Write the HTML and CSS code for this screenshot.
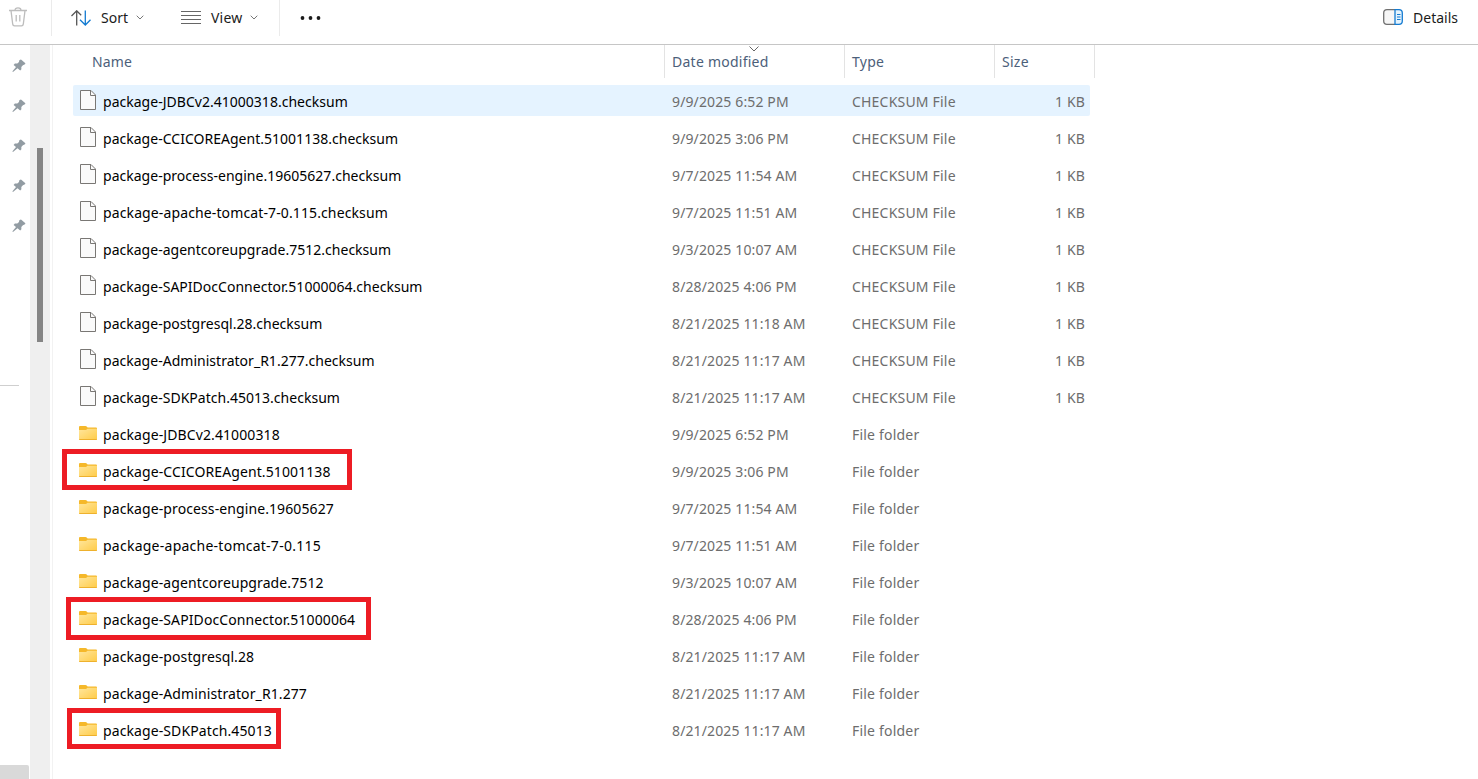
FILE: index.html
```html
<!DOCTYPE html>
<html lang="en">
  <head>
    <meta charset="UTF-8" />
    <meta name="viewport" content="width=device-width, initial-scale=1.0" />
    <title>File Explorer</title>
    <link rel="stylesheet" href="styles.css">
  </head>
  <body>
    <svg class="sprite">
      <linearGradient id="folderFill" x1="0" y1="0" x2="1" y2="1">
        <stop offset="0" stop-color="#ffe69c" />
        <stop offset="1" stop-color="#ffcb47" />
      </linearGradient>
      <symbol id="file" viewBox="0 0 18 20">
        <path d="M1.5 .5h10.5l4.5 4.5v14.5h-15z" fill="#fafafa" stroke="#797774" />
        <path d="M11.5 .5v5h5" fill="none" stroke="#797774" />
      </symbol>
      <symbol id="folder" viewBox="0 0 18 14">
        <path d="M0 1q0-1 1-1h5.500q.7 0 1.200.5l.9 1h8.400q1 0 1 1v2h-18z" fill="#f5b82a" />
        <path d="M0 4h7l1.500-1.200h9.500v10.200q0 1-1 1h-16q-1 0-1-1z" fill="url(#folderFill)" />
        <path d="M0 13h18q0 1-1 1h-16q-1 0-1-1z" fill="#eeb12d" />
      </symbol>
      <symbol id="pin" viewBox="0 0 14 14">
        <path d="M8.300 .7q.5-.4 1 0l3.800 3.200q.5.4.100 1l-.700.7-1.600.6-1.600 1.800.1 2.200-1.200 1.400-2.700-2.300-4.200 3.400-.8.200.200-.9 3.300-3.900-2.400-2.200 1.300-1.300 2.400-.1 1.700-1.500.3-1.700z" fill="#929ca3" />
      </symbol>
      <symbol id="chevron" viewBox="0 0 8 5">
        <path d="M.7.7l3.300 3.300 3.300-3.300" fill="none" stroke="#777" />
      </symbol>
    </svg>

    <div class="toolbar">
      <div class="tool-group delete">
        <svg class="trash" viewBox="0 0 18 20" fill="none" stroke="#bdbdbd" stroke-width="1.300">
          <path d="M0 3.500h18M6 3.300q0-2.500 3-2.500t3 2.500M2 3.700l1.700 13.500q.2 1.700 1.800 1.700h7q1.600 0 1.800-1.700l1.700-13.500M7.200 8v6.500M10.800 8v6.500" />
        </svg>
      </div>
      <div class="tool-group arrange">
        <button class="tool sort">
          <svg class="sort-icon" viewBox="0 0 20 16" fill="none" stroke-width="1.300">
            <path d="M5.700 15.500v-14.500M.5 6l5.200-5.200 4.500 4.500" stroke="#555" />
            <path d="M14.300.5v14.500M9 9.800l5.300 5.200 5.200-5.200" stroke="#147bd1" />
          </svg>
          <span>Sort</span>
          <svg class="chevron"><use href="#chevron" /></svg>
        </button>
        <button class="tool view">
          <svg class="view-icon" viewBox="0 0 20 14" stroke="#666">
            <path d="M0 .5h20M0 4.500h20M0 8.500h20M0 12.500h20" />
          </svg>
          <span>View</span>
          <svg class="chevron"><use href="#chevron" /></svg>
        </button>
      </div>
      <button class="tool more">
        <svg class="more-icon" viewBox="0 0 20 4" fill="#1b1b1b">
          <circle cx="2" cy="2" r="1.900" /><circle cx="10" cy="2" r="1.900" /><circle cx="18" cy="2" r="1.900" />
        </svg>
      </button>
      <button class="tool details">
        <svg class="details-icon" viewBox="0 0 20 16" fill="none">
          <path d="M12 .7h-8q-3.300 0-3.300 3.300v8q0 3.300 3.300 3.300h8" fill="#f6f6f6" stroke="#707070" stroke-width="1.300" />
          <path d="M12 .7h4q3.300 0 3.300 3.300v8q0 3.300-3.300 3.300h-4z" fill="#e4f3fd" stroke="#147bd1" stroke-width="1.300" />
          <path d="M14 5.500h3.500M14 8h3.500M14 10.500h3.500" stroke="#147bd1" stroke-width="1.200" />
        </svg>
        <span>Details</span>
      </button>
    </div>

    <div class="main">
      <div class="sidebar">
        <div class="pins">
          <svg class="pin"><use href="#pin" /></svg>
          <svg class="pin"><use href="#pin" /></svg>
          <svg class="pin"><use href="#pin" /></svg>
          <svg class="pin"><use href="#pin" /></svg>
          <svg class="pin"><use href="#pin" /></svg>
        </div>
        <div class="divider"></div>
        <div class="selected-item"></div>
      </div>
      <div class="scrollbar"><div class="thumb"></div></div>

      <div class="files">
        <div class="columns header">
          <span class="name">Name</span>
          <span class="date">Date modified<svg class="sort-mark" viewBox="0 0 10 6"><path d="M.5.5l4.500 4.500 4.500-4.500" fill="none" stroke="#666" /></svg></span>
          <span class="type">Type</span>
          <span class="size">Size</span>
        </div>
        <div class="rows">
          <div class="columns row hover"><span class="name"><svg class="file"><use href="#file" /></svg><b>package-JDBCv2.41000318.checksum</b></span><span>9/9/2025 6:52 PM</span><span class="type">CHECKSUM File</span><span class="kb">1 KB</span></div>
          <div class="columns row"><span class="name"><svg class="file"><use href="#file" /></svg><b>package-CCICOREAgent.51001138.checksum</b></span><span>9/9/2025 3:06 PM</span><span class="type">CHECKSUM File</span><span class="kb">1 KB</span></div>
          <div class="columns row"><span class="name"><svg class="file"><use href="#file" /></svg><b>package-process-engine.19605627.checksum</b></span><span>9/7/2025 11:54 AM</span><span class="type">CHECKSUM File</span><span class="kb">1 KB</span></div>
          <div class="columns row"><span class="name"><svg class="file"><use href="#file" /></svg><b class="wide">package-apache-tomcat-7-0.115.checksum</b></span><span>9/7/2025 11:51 AM</span><span class="type">CHECKSUM File</span><span class="kb">1 KB</span></div>
          <div class="columns row"><span class="name"><svg class="file"><use href="#file" /></svg><b>package-agentcoreupgrade.7512.checksum</b></span><span>9/3/2025 10:07 AM</span><span class="type">CHECKSUM File</span><span class="kb">1 KB</span></div>
          <div class="columns row"><span class="name"><svg class="file"><use href="#file" /></svg><b>package-SAPIDocConnector.51000064.checksum</b></span><span>8/28/2025 4:06 PM</span><span class="type">CHECKSUM File</span><span class="kb">1 KB</span></div>
          <div class="columns row"><span class="name"><svg class="file"><use href="#file" /></svg><b>package-postgresql.28.checksum</b></span><span>8/21/2025 11:18 AM</span><span class="type">CHECKSUM File</span><span class="kb">1 KB</span></div>
          <div class="columns row"><span class="name"><svg class="file"><use href="#file" /></svg><b>package-Administrator_R1.277.checksum</b></span><span>8/21/2025 11:17 AM</span><span class="type">CHECKSUM File</span><span class="kb">1 KB</span></div>
          <div class="columns row"><span class="name"><svg class="file"><use href="#file" /></svg><b>package-SDKPatch.45013.checksum</b></span><span>8/21/2025 11:17 AM</span><span class="type">CHECKSUM File</span><span class="kb">1 KB</span></div>
          <div class="columns row"><span class="name"><svg class="folder"><use href="#folder" /></svg><b>package-JDBCv2.41000318</b></span><span>9/9/2025 6:52 PM</span><span class="type">File folder</span></div>
          <div class="columns row"><span class="name"><svg class="folder"><use href="#folder" /></svg><b>package-CCICOREAgent.51001138</b></span><span>9/9/2025 3:06 PM</span><span class="type">File folder</span><i class="mark mark-agent"></i></div>
          <div class="columns row"><span class="name"><svg class="folder"><use href="#folder" /></svg><b>package-process-engine.19605627</b></span><span>9/7/2025 11:54 AM</span><span class="type">File folder</span></div>
          <div class="columns row"><span class="name"><svg class="folder"><use href="#folder" /></svg><b class="wide">package-apache-tomcat-7-0.115</b></span><span>9/7/2025 11:51 AM</span><span class="type">File folder</span></div>
          <div class="columns row"><span class="name"><svg class="folder"><use href="#folder" /></svg><b>package-agentcoreupgrade.7512</b></span><span>9/3/2025 10:07 AM</span><span class="type">File folder</span></div>
          <div class="columns row"><span class="name"><svg class="folder"><use href="#folder" /></svg><b>package-SAPIDocConnector.51000064</b></span><span>8/28/2025 4:06 PM</span><span class="type">File folder</span><i class="mark mark-connector"></i></div>
          <div class="columns row"><span class="name"><svg class="folder"><use href="#folder" /></svg><b>package-postgresql.28</b></span><span>8/21/2025 11:17 AM</span><span class="type">File folder</span></div>
          <div class="columns row"><span class="name"><svg class="folder"><use href="#folder" /></svg><b>package-Administrator_R1.277</b></span><span>8/21/2025 11:17 AM</span><span class="type">File folder</span></div>
          <div class="columns row"><span class="name"><svg class="folder"><use href="#folder" /></svg><b>package-SDKPatch.45013</b></span><span>8/21/2025 11:17 AM</span><span class="type">File folder</span><i class="mark mark-patch"></i></div>
        </div>
      </div>
    </div>
  </body>
</html>
```

FILE: styles.css
```css
* {
  box-sizing: border-box;
}
body {
  margin: 0;
  height: 779px;
  overflow: hidden;
  background: #fff;
  color: #1b1b1b;
  font-family: "Noto Sans", "Open Sans", sans-serif;
  font-size: 14px;
}
svg {
  display: block;
  flex: none;
}
.sprite {
  position: absolute;
  width: 0;
  height: 0;
}

/* Toolbar */
.toolbar {
  display: flex;
  height: 45px;
  padding-bottom: 8px;
  border-bottom: 1px solid #c6c6c6;
}
.tool-group {
  display: flex;
  border-right: 1px solid #ebebeb;
}
.delete {
  width: 52px;
  padding: 7px 0 0 9px;
}
.trash {
  width: 18px;
  height: 20px;
}
.arrange {
  width: 228px;
  padding-left: 19px;
  gap: 37px;
}
.tool {
  display: flex;
  align-items: center;
  height: 35px;
  padding: 0;
  border: none;
  background: none;
  color: inherit;
  font: inherit;
  letter-spacing: 0;
}
.sort-icon {
  width: 20px;
  height: 16px;
  margin-right: 10px;
}
.view-icon {
  width: 20px;
  height: 14px;
  margin-right: 10px;
}
.sort span {
  width: 35px;
}
.view span {
  width: 39px;
  letter-spacing: 0.2px;
}
.tool span {
  text-align: left;
}
.chevron {
  width: 8px;
  height: 5px;
}
.more {
  margin-left: 20px;
}
.more-icon {
  width: 21px;
  height: 4px;
}
.details {
  margin-left: auto;
  margin-right: 20px;
}
.details-icon {
  width: 20px;
  height: 16px;
  margin: -1px 10px 0 0;
}

/* Navigation pane */
.main {
  display: flex;
  height: 734px;
}
.sidebar {
  display: flex;
  flex-direction: column;
  width: 30px;
}
.pins {
  display: flex;
  flex-direction: column;
  gap: 26px;
  padding: 14px 0 0 12px;
}
.pin {
  width: 14px;
  height: 14px;
}
.divider {
  width: 19px;
  height: 1px;
  margin-top: 152px;
  background: #cfcfcf;
}
.selected-item {
  width: 29px;
  height: 14px;
  margin-top: auto;
  border-radius: 0 2px 0 0;
  background: #d9d9d9;
}
.scrollbar {
  width: 20px;
  padding: 103px 0 0 7px;
  background: #efefef;
}
.thumb {
  width: 6px;
  height: 194px;
  background: #858585;
}

/* File list */
.files {
  width: 1050px;
  margin-left: 2px;
  padding-left: 20px;
  border-left: 1px solid #f2f2f2;
}
.columns {
  display: grid;
  grid-template-columns: 591px 180px 150px 96px;
}
.header {
  height: 32px;
  width: 1022px;
  grid-template-columns: 592px 180px 150px 100px;
  line-height: 33px;
  color: #4c607a;
  letter-spacing: 0.25px;
}
.header span {
  position: relative;
  padding-left: 7px;
  border-right: 1px solid #e3e3e3;
}
.header .name {
  padding-left: 19px;
  letter-spacing: 0.1px;
}
.sort-mark {
  position: absolute;
  left: 84px;
  top: 1px;
  width: 10px;
  height: 6px;
}
.rows {
  display: flex;
  flex-direction: column;
  gap: 6px;
  padding-top: 8px;
}
.row {
  position: relative;
  width: 1017px;
  height: 31px;
  line-height: 33px;
  border-radius: 2px;
  color: #6d6d6d;
  letter-spacing: 0.13px;
}
.hover {
  background: #e5f3ff;
}
.row span {
  padding-left: 8px;
}
.row .name {
  display: flex;
  padding-left: 6px;
  color: #000;
}
.row .type {
  letter-spacing: 0.2px;
}
.name b {
  font-weight: normal;
}
.file + b {
  letter-spacing: 0.02px;
}
.folder + b {
  letter-spacing: 0.1px;
}
.file + .wide {
  letter-spacing: 0.12px;
}
.folder + .wide {
  letter-spacing: 0.25px;
}
.file {
  width: 18px;
  height: 20px;
  margin: 5px 6px 0 0;
}
.folder {
  width: 18px;
  height: 14px;
  margin: 8px 6px 0 0;
}
.row .kb {
  padding-right: 5px;
  text-align: right;
}

/* Red callouts around the highlighted folders */
.mark {
  position: absolute;
  border: 5px solid #ed1c24;
}
.mark-agent {
  left: -11px;
  top: -6px;
  width: 290px;
  height: 41px;
}
.mark-connector {
  left: -7px;
  top: -6px;
  width: 305px;
  height: 43px;
}
.mark-patch {
  left: -6px;
  top: -6px;
  width: 214px;
  height: 41px;
}
```
